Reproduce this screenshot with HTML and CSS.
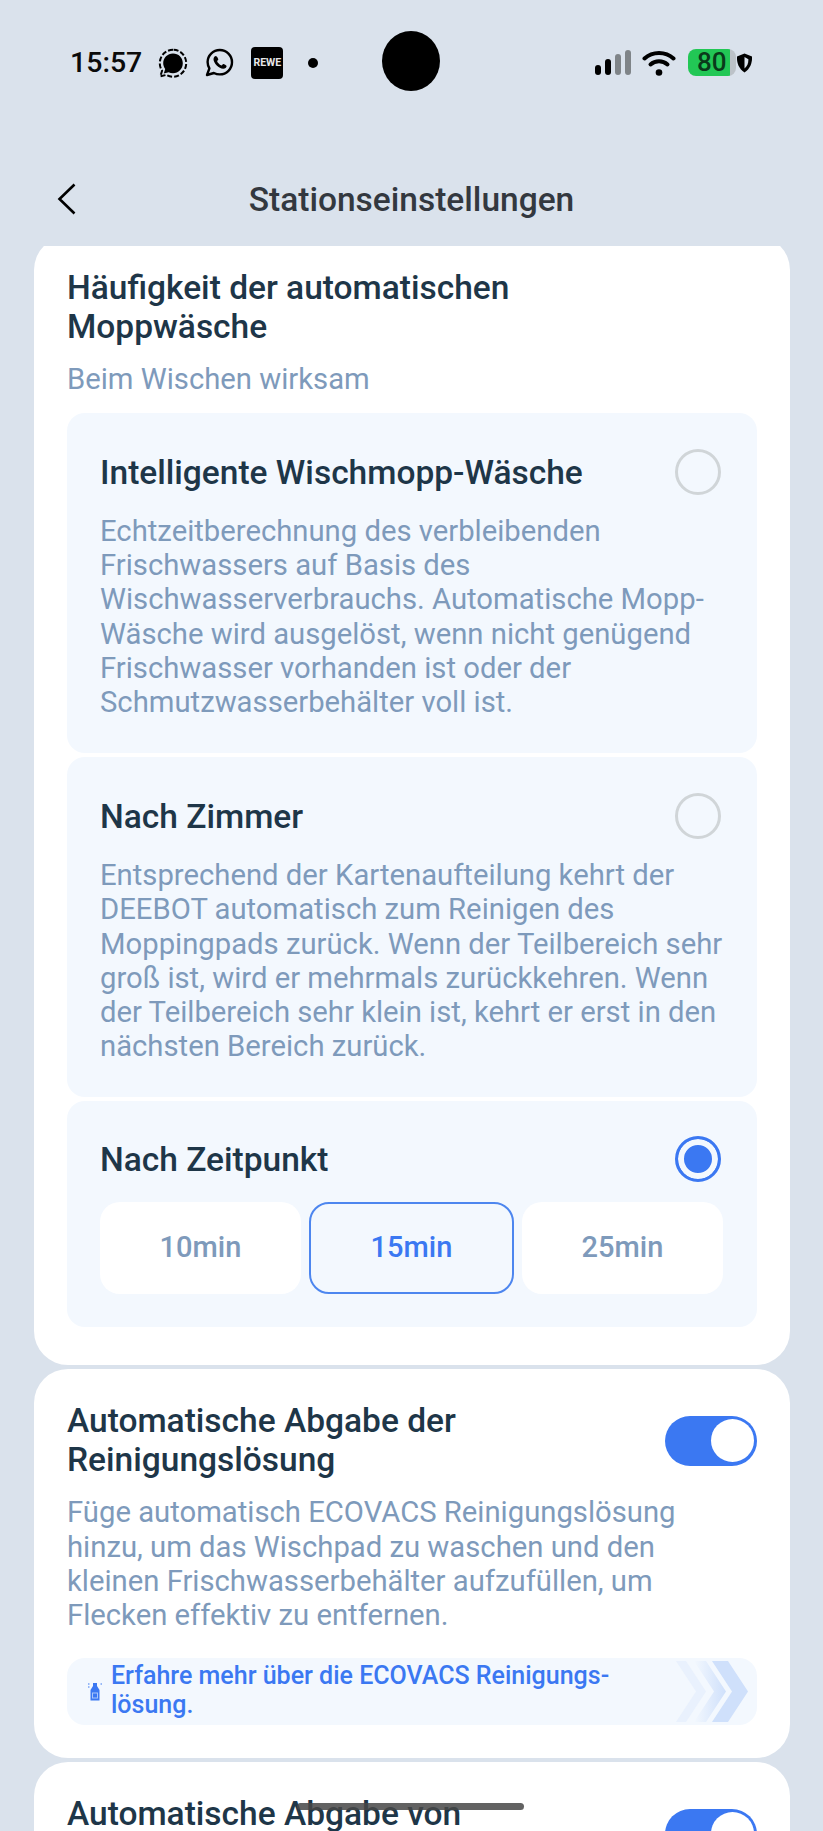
FILE: index.html
```html
<!DOCTYPE html>
<html lang="de">
<head>
  <meta charset="UTF-8">
  <title>Stationseinstellungen</title>
  <link rel="stylesheet" href="styles.css">
</head>
<body>

  <div class="camera"></div>
  <div class="home-bar"></div>

  <div class="status-bar">
    <div class="status-left">
      <span class="time">15:57</span>
      <svg class="ic-signal" width="30" height="30" viewBox="0 0 30 30">
        <path d="M15 5.500c-5.500 0-9.800 4.300-9.800 9.700 0 2.200.8 4.200 2 5.800L5.800 25.500l4.800-1.300c1.300.6 2.800 1 4.400 1 5.500 0 9.800-4.400 9.800-10S20.500 5.500 15 5.500z" fill="#000"/>
        <path d="M15 1.800c-7.400 0-13.200 6-13.200 13.400 0 2.800.8 5.400 2.300 7.500L2.300 28.400l6-1.500c2 1.200 4.300 1.800 6.700 1.800 7.400 0 13.200-6 13.200-13.500S22.400 1.800 15 1.800z" fill="none" stroke="#000" stroke-width="2" stroke-dasharray="5 2"/>
      </svg>
      <svg class="ic-whatsapp" width="29" height="29" viewBox="0 0 29 29">
        <path d="M14.800 2C8 2 2.600 7.400 2.600 14c0 2.400.7 4.500 1.800 6.400L2 27l6.900-2c1.800.9 3.800 1.400 5.900 1.400 6.800 0 12.200-5.500 12.200-12.200S21.600 2 14.800 2z" fill="none" stroke="#000" stroke-width="2.400" stroke-linejoin="round"/>
        <path d="M10.800 8c-.8 0-2.300 1.200-2.300 3.300 0 3.800 5.400 9.500 9.700 9.500 2 0 3.400-1.300 3.400-2.700 0-.8-2.900-2.200-3.400-2-.6.200-1 1.300-1.600 1.300-1.200 0-4.400-3-4.400-4.200 0-.6 1-1.100 1.100-1.700.100-.6-1.300-3.500-2.500-3.500z" fill="#000"/>
      </svg>
      <span class="rewe">REWE</span>
      <span class="dot"></span>
    </div>
    <div class="status-right">
      <div class="signal">
        <span class="bar on b1"></span>
        <span class="bar on b2"></span>
        <span class="bar b3"></span>
        <span class="bar b4"></span>
      </div>
      <svg class="ic-wifi" width="34" height="27" viewBox="0 0 34 27">
        <path d="M2.500 9.500C10.500 2 23.500 2 31.500 9.500" fill="none" stroke="#000" stroke-width="4" stroke-linecap="round"/>
        <path d="M8.500 15.500c4.800-4.300 12.200-4.300 17 0" fill="none" stroke="#000" stroke-width="4" stroke-linecap="round"/>
        <circle cx="17" cy="23.500" r="3.300" fill="#000"/>
      </svg>
      <div class="battery">80</div>
      <svg class="ic-shield" width="17" height="20" viewBox="0 0 17 20">
        <path d="M8.500 .5 16 3.500c.4 6.800-2 12.300-7.500 16-5.500-3.700-7.900-9.200-7.500-16z" fill="#000"/>
        <path d="M8.500 4v11.500c2.800-2.200 4-5.400 3.900-9.200z" fill="#dae2ec"/>
      </svg>
    </div>
  </div>

  <div class="nav-bar">
    <svg class="back" width="20" height="32" viewBox="0 0 20 32">
      <path d="M17.500 1.500 2.500 16l15 14.500" fill="none" stroke="#000" stroke-width="2.600"/>
    </svg>
    <h1>Stationseinstellungen</h1>
  </div>

  <div class="scroll">
    <section class="card card-first">
      <h2>Häufigkeit der automatischen Moppwäsche</h2>
      <p class="hint">Beim Wischen wirksam</p>

      <div class="panel">
        <div class="panel-head">
          <h3>Intelligente Wischmopp-Wäsche</h3>
          <span class="radio"></span>
        </div>
        <p class="desc">Echtzeitberechnung des verbleibenden Frischwassers auf Basis des Wischwasserverbrauchs. Automatische Mopp-Wäsche wird ausgelöst, wenn nicht genügend Frischwasser vorhanden ist oder der Schmutzwasserbehälter voll ist.</p>
      </div>

      <div class="panel">
        <div class="panel-head">
          <h3>Nach Zimmer</h3>
          <span class="radio"></span>
        </div>
        <p class="desc">Entsprechend der Kartenaufteilung kehrt der DEEBOT automatisch zum Reinigen des Moppingpads zurück. Wenn der Teilbereich sehr groß ist, wird er mehrmals zurückkehren. Wenn der Teilbereich sehr klein ist, kehrt er erst in den nächsten Bereich zurück.</p>
      </div>

      <div class="panel panel-last">
        <div class="panel-head">
          <h3>Nach Zeitpunkt</h3>
          <span class="radio selected"></span>
        </div>
        <div class="times">
          <div class="time-btn">10min</div>
          <div class="time-btn active">15min</div>
          <div class="time-btn">25min</div>
        </div>
      </div>
    </section>

    <section class="card">
      <div class="row">
        <h2>Automatische Abgabe der Reinigungslösung</h2>
        <span class="toggle"></span>
      </div>
      <p class="desc card-desc">Füge automatisch ECOVACS Reinigungslösung hinzu, um das Wischpad zu waschen und den kleinen Frischwasserbehälter aufzufüllen, um Flecken effektiv zu entfernen.</p>
      <div class="info">
        <svg class="bottle" width="16" height="20" viewBox="0 0 16 20">
          <path d="M6 1h4v3l2.500 4v10.500H3.500V8L6 4z" fill="#3b78f2"/>
          <rect x="5.500" y="11" width="5" height="5" fill="none" stroke="#a9c6fa" stroke-width="1"/>
          <path d="M1 2h1.500M1 5h1.500M13.500 2H15" stroke="#3b78f2" stroke-width="1"/>
        </svg>
        <span class="info-text">Erfahre mehr über die ECOVACS Reinigungs-<br>lösung.</span>
        <svg class="chevrons" width="72" height="61" viewBox="0 0 72 61">
          <defs>
            <linearGradient id="fade" x1="0" x2="1" y1="0" y2="0">
              <stop offset="0" stop-color="#f3f8fe"/>
              <stop offset="1" stop-color="#cfe0fb"/>
            </linearGradient>
          </defs>
          <path d="M0 0h10l20 30.500L10 61H0l20-30.500z" fill="#e9f1fd"/>
          <path d="M18 0h12l20 30.500L30 61H18l20-30.500z" fill="url(#fade)"/>
          <path d="M36 0h16l20 30.500L52 61H36l20-30.500z" fill="#cfe0fb"/>
        </svg>
      </div>
    </section>

    <section class="card">
      <div class="row">
        <h2>Automatische Abgabe von</h2>
        <span class="toggle"></span>
      </div>
    </section>
  </div>

</body>
</html>
```

FILE: styles.css
```css
* {
  box-sizing: border-box;
}

html, body {
  margin: 0;
  height: 1831px;
  overflow: hidden;
}

body {
  font-family: Roboto, sans-serif;
  background: #dae2ec;
  position: relative;
}

h1, h2, h3, p {
  margin: 0;
}

/* punch-hole and gesture bar sit over everything */
.camera {
  position: absolute;
  left: 382px;
  top: 31px;
  width: 58px;
  height: 60px;
  border-radius: 50%;
  background: #000;
}

.home-bar {
  position: absolute;
  left: 297px;
  top: 1803px;
  width: 227px;
  height: 7px;
  border-radius: 4px;
  background: rgba(70, 70, 70, 0.85);
  z-index: 2;
}

.status-bar {
  height: 124px;
  padding: 46px 70px 0 70px;
  display: flex;
  justify-content: space-between;
  align-items: flex-start;
}

.status-left, .status-right {
  display: flex;
  align-items: center;
  height: 33px;
}

.time {
  font-size: 28.500px;
  font-weight: 500;
  color: #0b0b0b;
  margin-right: 16px;
}

.ic-whatsapp {
  margin-left: 17px;
}

.rewe {
  margin-left: 17px;
  width: 32px;
  height: 32px;
  border-radius: 4px;
  background: #000;
  color: #e8e8e8;
  font-size: 10.500px;
  font-weight: 700;
  text-align: center;
  line-height: 32px;
}

.dot {
  margin-left: 25px;
  width: 10px;
  height: 10px;
  border-radius: 50%;
  background: #000;
}

.signal {
  display: flex;
  align-items: flex-end;
  gap: 4px;
  height: 25px;
  margin-right: 11px;
}

.bar {
  width: 6px;
  border-radius: 3px;
  background: #7f8488;
}

.bar.on {
  background: #000;
}

.b1 { height: 10px; }
.b2 { height: 16px; }
.b3 { height: 21px; }
.b4 { height: 25px; }

.battery {
  margin-left: 12px;
  width: 48px;
  height: 27px;
  padding-left: 9px;
  border-radius: 8px;
  background: linear-gradient(to right, #22c755 87.500%, #bcc2c8 87.500%);
  color: #0a3a1a;
  font-size: 26px;
  font-weight: 500;
  line-height: 27px;
}

.nav-bar {
  position: relative;
  display: flex;
  align-items: center;
  justify-content: center;
  height: 150px;
  margin-bottom: -28px;
}

.nav-bar h1 {
  font-size: 33.500px;
  font-weight: 500;
  color: #33383f;
}

.back {
  position: absolute;
  left: 57px;
  top: 59px;
}

.scroll {
  height: 1585px;
  overflow: hidden;
  position: relative;
}

.card {
  width: 756px;
  margin: 0 0 4px 34px;
  padding: 32px 33px 33px;
  background: #fff;
  border-radius: 34px;
}

.card-first {
  margin-top: -10px;
  padding-top: 32px;
  padding-bottom: 38px;
}

h2 {
  max-width: 500px;
  font-size: 33.500px;
  line-height: 39px;
  font-weight: 500;
  color: #1e3648;
}

.hint {
  font-size: 29.250px;
  line-height: 34px;
  margin-top: 16px;
  color: #7e9abb;
}

.panel {
  margin-top: 4px;
  padding: 36px 33px 34px;
  border-radius: 18px;
  background: #f3f8fe;
}

.panel-last {
  padding-top: 35px;
  padding-bottom: 33px;
}

.hint + .panel {
  margin-top: 17px;
}

.panel-head {
  display: flex;
  justify-content: space-between;
  align-items: center;
  height: 46px;
}

h3 {
  font-size: 33.500px;
  font-weight: 500;
  color: #1e3648;
}

.radio {
  width: 46px;
  height: 46px;
  margin-right: 3px;
  border-radius: 50%;
  border: 3px solid #d0d5d8;
}

.radio.selected {
  border-color: #3b78f2;
  background: #3b78f2;
  box-shadow: inset 0 0 0 6px #f3f8fe;
}

.desc {
  margin-top: 19px;
  font-size: 29.250px;
  line-height: 34.200px;
  color: #7e9abb;
}

.times {
  display: flex;
  gap: 8px;
  margin-top: 20px;
  margin-right: 1px;
}

.time-btn {
  flex: 1;
  height: 92px;
  border-radius: 20px;
  background: #fff;
  color: #7e9abb;
  font-size: 29px;
  font-weight: 500;
  line-height: 90px;
  text-align: center;
}

.time-btn.active {
  background: #f3f8fe;
  border: 2px solid #4d86ef;
  color: #3b78f2;
  line-height: 86px;
}

.row {
  display: flex;
  justify-content: space-between;
  align-items: flex-start;
}

.toggle {
  position: relative;
  width: 92px;
  height: 50px;
  margin-top: 15px;
  border-radius: 25px;
  background: #3b78f2;
}

.toggle::after {
  content: "";
  position: absolute;
  right: 3px;
  top: 3px;
  width: 43px;
  height: 43px;
  border-radius: 50%;
  background: #fff;
}

.card-desc {
  max-width: 640px;
  margin-top: 16px;
}

.info {
  position: relative;
  display: flex;
  align-items: center;
  height: 67px;
  margin-top: 26px;
  padding-left: 20px;
  border-radius: 18px;
  background: #f3f8fe;
}

.info-text {
  margin-left: 8px;
  margin-bottom: 4px;
  font-size: 25px;
  line-height: 29px;
  font-weight: 500;
  color: #3b78f2;
}

.chevrons {
  position: absolute;
  right: 9px;
  top: 3px;
}
```
